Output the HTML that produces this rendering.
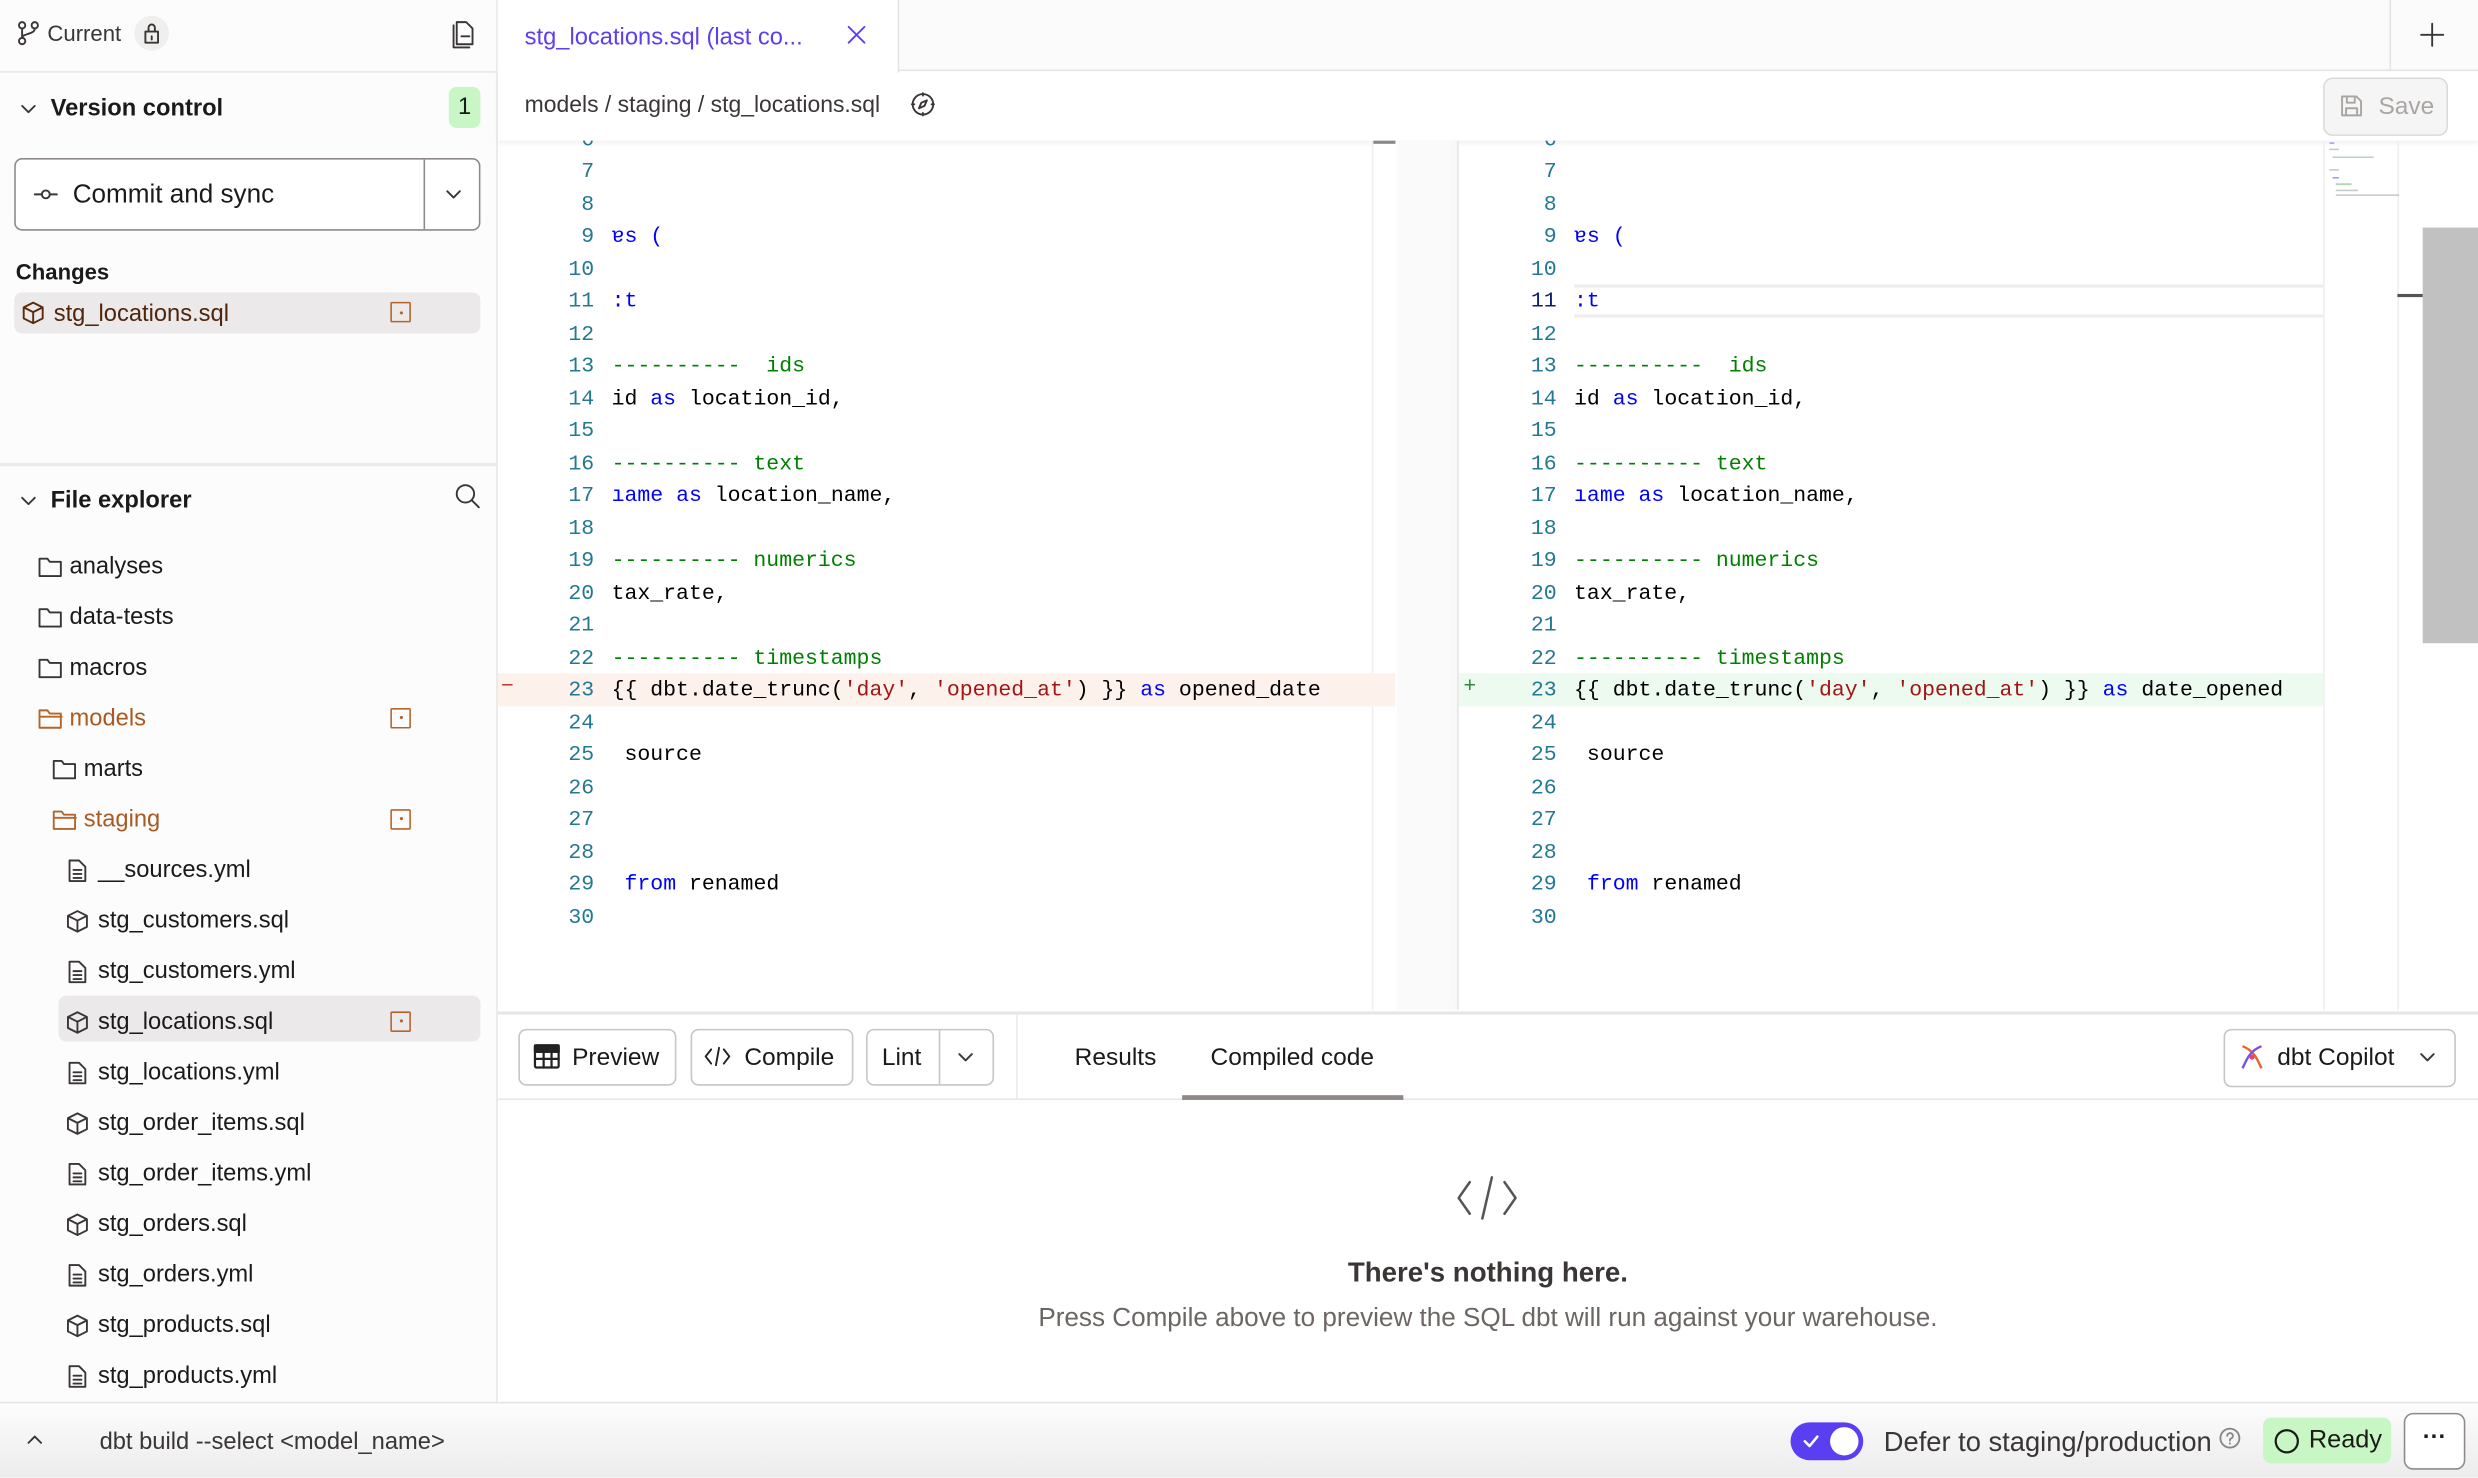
<!DOCTYPE html>
<html><head><meta charset="utf-8"><style>
*{box-sizing:border-box;margin:0;padding:0}
html,body{width:2478px;height:1478px;overflow:hidden;background:#fff}
#w{width:1568px;height:935px;transform:scale(1.58036);transform-origin:0 0;position:relative;font-family:"Liberation Sans",sans-serif;color:#1c1a19;font-size:15px}
.a{position:absolute}
.ic{position:absolute;fill:none;stroke:#3a3635;stroke-width:1.2;stroke-linecap:round;stroke-linejoin:round}
.mono{font-family:"Liberation Mono",monospace;font-size:13.6px}
.ln{position:absolute;width:40px;text-align:right;color:#237893}
.cd{position:absolute;white-space:pre;color:#000}
.k{color:#0000ff}.c{color:#008000}.s{color:#a31515}
.tree{position:absolute;left:0;height:32px;line-height:32px;font-size:15px}
.btn{position:absolute;border:1px solid #c8c4c2;border-radius:5px;background:#fff;height:36px;line-height:34px;font-size:15px}
.dot{position:absolute;width:13px;height:13px;border:1.3px solid #b5652b;border-radius:1px}
.dot:after{content:"";position:absolute;left:4.5px;top:4.5px;width:2px;height:2px;background:#b5652b;border-radius:1px}
</style></head><body><div id="w">
<!-- sidebar -->
<div class="a" style="left:0;top:0;width:315px;height:888px;background:#fcfcfc;border-right:1px solid #e8e6e5"></div>
<div class="a" style="left:0;top:45px;width:315px;height:1px;background:#e8e6e5"></div>
<svg class="ic" style="left:10px;top:13px" width="16" height="16"><circle cx="4" cy="3" r="2"/><circle cx="12" cy="3" r="2"/><circle cx="4" cy="13" r="2"/><path d="M4 5v6M12 5c0 4-8 3-8 6"/></svg>
<div class="a" style="left:30px;top:13px;font-size:14px;color:#3a3635">Current</div>
<div class="a" style="left:85px;top:10px;width:22px;height:22px;border-radius:11px;background:#f0efee"></div>
<svg class="ic" style="left:89px;top:14px" width="14" height="14"><rect x="3" y="6" width="8" height="7"/><path d="M5 6V3.5a2 2 0 0 1 4 0V6M7 9v2"/></svg>
<svg class="ic" style="left:285px;top:12px" width="18" height="20"><path d="M4 2h6l4 4v10H4z M2 4v14h10"/><path d="M7 11h5"/></svg>
<svg class="ic" style="left:11px;top:62px" width="14" height="14"><path d="M3 5l4 4 4-4"/></svg>
<div class="a" style="left:32px;top:60px;font-weight:bold;font-size:15px">Version control</div>
<div class="a" style="left:284px;top:55px;width:20px;height:26px;border-radius:5px;background:#c8f7c5;text-align:center;line-height:26px;font-size:15px">1</div>
<div class="a" style="left:9px;top:100px;width:295px;height:46px;border:1px solid #8f8a88;border-radius:5px;background:#fff"></div>
<div class="a" style="left:268px;top:101px;width:1px;height:44px;background:#8f8a88"></div>
<svg class="ic" style="left:20px;top:116px" width="18" height="14"><circle cx="9" cy="7" r="2.5"/><path d="M2 7h4.5M11.5 7h4.5"/></svg>
<div class="a" style="left:46px;top:114px;font-size:16.5px">Commit and sync</div>
<svg class="ic" style="left:280px;top:116px" width="14" height="14"><path d="M3 5l4 4 4-4"/></svg>
<div class="a" style="left:10px;top:164px;font-weight:bold;font-size:14px">Changes</div>
<div class="a" style="left:9px;top:185px;width:295px;height:26px;border-radius:5px;background:#ebe9e9"></div>
<svg class="ic" style="left:13px;top:190px;stroke:#5a2a0a" width="16" height="16"><path d="M8 1.5l6 3v7l-6 3-6-3v-7zM2 4.5l6 3 6-3M8 7.5v7"/></svg>
<div class="a" style="left:34px;top:190px;color:#4f250c;font-size:15px">stg_locations.sql</div>
<div class="dot" style="left:247px;top:191px"></div>
<div class="a" style="left:0;top:293px;width:315px;height:2px;background:#eceae9"></div>
<svg class="ic" style="left:11px;top:310px" width="14" height="14"><path d="M3 5l4 4 4-4"/></svg>
<div class="a" style="left:32px;top:308px;font-weight:bold;font-size:15px">File explorer</div>
<svg class="ic" style="left:287px;top:305px" width="18" height="18"><circle cx="7.5" cy="7.5" r="5.5"/><path d="M11.5 11.5l4.5 4.5"/></svg>
<div style="position:absolute;left:0;top:342.5px;width:315px">
<svg class="ic" style="left:24px;top:9px" width="16" height="14"><path d="M1 1.5h5l1.5 2h7v9H1z"/></svg><div class="tree" style="left:44px;top:0">analyses</div>
<svg class="ic" style="left:24px;top:41px" width="16" height="14"><path d="M1 1.5h5l1.5 2h7v9H1z"/></svg><div class="tree" style="left:44px;top:32px">data-tests</div>
<svg class="ic" style="left:24px;top:73px" width="16" height="14"><path d="M1 1.5h5l1.5 2h7v9H1z"/></svg><div class="tree" style="left:44px;top:64px">macros</div>
<svg class="ic" style="left:24px;top:105px;stroke:#b5652b" width="16" height="14"><path d="M1 1.5h5l1.5 2h7v9H1zM1 5.5h14"/></svg><div class="tree" style="left:44px;top:96px;color:#a95a22">models</div><div class="dot" style="left:247px;top:105px"></div>
<svg class="ic" style="left:33px;top:137px" width="16" height="14"><path d="M1 1.5h5l1.5 2h7v9H1z"/></svg><div class="tree" style="left:53px;top:128px">marts</div>
<svg class="ic" style="left:33px;top:169px;stroke:#b5652b" width="16" height="14"><path d="M1 1.5h5l1.5 2h7v9H1zM1 5.5h14"/></svg><div class="tree" style="left:53px;top:160px;color:#a95a22">staging</div><div class="dot" style="left:247px;top:169px"></div>
<div class="a" style="left:37px;top:287px;width:267px;height:29px;border-radius:5px;background:#ebe9e9"></div>
</div>
<div style="position:absolute;left:0;top:534.5px;width:315px">
<svg class="ic" style="left:42px;top:8px" width="14" height="16"><path d="M2 1.5h6l4 4v9H2zM4.5 7.5h5M4.5 10h5M4.5 12.5h5"/></svg><div class="tree" style="left:62px;top:0">__sources.yml</div>
<svg class="ic" style="left:41px;top:40px" width="16" height="16"><path d="M8 1.5l6 3v7l-6 3-6-3v-7zM2 4.5l6 3 6-3M8 7.5v7"/></svg><div class="tree" style="left:62px;top:32px">stg_customers.sql</div>
<svg class="ic" style="left:42px;top:72px" width="14" height="16"><path d="M2 1.5h6l4 4v9H2zM4.5 7.5h5M4.5 10h5M4.5 12.5h5"/></svg><div class="tree" style="left:62px;top:64px">stg_customers.yml</div>
<svg class="ic" style="left:41px;top:104px" width="16" height="16"><path d="M8 1.5l6 3v7l-6 3-6-3v-7zM2 4.5l6 3 6-3M8 7.5v7"/></svg><div class="tree" style="left:62px;top:96px">stg_locations.sql</div><div class="dot" style="left:247px;top:105px"></div>
<svg class="ic" style="left:42px;top:136px" width="14" height="16"><path d="M2 1.5h6l4 4v9H2zM4.5 7.5h5M4.5 10h5M4.5 12.5h5"/></svg><div class="tree" style="left:62px;top:128px">stg_locations.yml</div>
<svg class="ic" style="left:41px;top:168px" width="16" height="16"><path d="M8 1.5l6 3v7l-6 3-6-3v-7zM2 4.5l6 3 6-3M8 7.5v7"/></svg><div class="tree" style="left:62px;top:160px">stg_order_items.sql</div>
<svg class="ic" style="left:42px;top:200px" width="14" height="16"><path d="M2 1.5h6l4 4v9H2zM4.5 7.5h5M4.5 10h5M4.5 12.5h5"/></svg><div class="tree" style="left:62px;top:192px">stg_order_items.yml</div>
<svg class="ic" style="left:41px;top:232px" width="16" height="16"><path d="M8 1.5l6 3v7l-6 3-6-3v-7zM2 4.5l6 3 6-3M8 7.5v7"/></svg><div class="tree" style="left:62px;top:224px">stg_orders.sql</div>
<svg class="ic" style="left:42px;top:264px" width="14" height="16"><path d="M2 1.5h6l4 4v9H2zM4.5 7.5h5M4.5 10h5M4.5 12.5h5"/></svg><div class="tree" style="left:62px;top:256px">stg_orders.yml</div>
<svg class="ic" style="left:41px;top:296px" width="16" height="16"><path d="M8 1.5l6 3v7l-6 3-6-3v-7zM2 4.5l6 3 6-3M8 7.5v7"/></svg><div class="tree" style="left:62px;top:288px">stg_products.sql</div>
<svg class="ic" style="left:42px;top:328px" width="14" height="16"><path d="M2 1.5h6l4 4v9H2zM4.5 7.5h5M4.5 10h5M4.5 12.5h5"/></svg><div class="tree" style="left:62px;top:320px">stg_products.yml</div>
</div>
<!-- tab bar -->
<div class="a" style="left:315px;top:0;width:1253px;height:45px;background:#fbfbfb;border-bottom:1px solid #e6e4e3"></div>
<div class="a" style="left:315px;top:0;width:254px;height:46px;background:#fff;border-right:1px solid #e6e4e3"></div>
<div class="a" style="left:332px;top:15px;color:#5b3ff0;font-size:15px">stg_locations.sql (last co...</div>
<svg class="ic" style="left:535px;top:15px;stroke:#5b3ff0" width="14" height="14"><path d="M2 2l10 10M12 2L2 12"/></svg>
<div class="a" style="left:1512px;top:0;width:1px;height:45px;background:#e6e4e3"></div>
<svg class="ic" style="left:1531px;top:14px" width="16" height="16"><path d="M8 1v14M1 8h14"/></svg>
<!-- breadcrumb -->
<div class="a" style="left:315px;top:46px;width:1253px;height:43px;background:#fff;box-shadow:0 2px 3px rgba(0,0,0,.06)"></div>
<div class="a" style="left:332px;top:59px;font-size:14.5px;color:#3a3635">models / staging / stg_locations.sql</div>
<svg class="ic" style="left:576px;top:58px" width="16" height="16"><circle cx="8" cy="8" r="6.5"/><path d="M10.5 5.5L9 9 5.5 10.5 7 7z"/><path d="M8 1v1.5M8 13.5V15M1 8h1.5M13.5 8H15"/></svg>
<div class="a" style="left:1470px;top:49px;width:79px;height:37px;border:1px solid #dcdad9;border-radius:6px;background:#f6f5f5"></div>
<svg class="ic" style="left:1480px;top:59px;stroke:#a9a5a3" width="16" height="16"><path d="M2 2h9l3 3v9H2zM5 2v4h5V2M4.5 14V9.5h7V14"/></svg>
<div class="a" style="left:1505px;top:59px;color:#a9a5a3;font-size:15.5px">Save</div>
<!-- editor -->
<div class="a" style="left:868px;top:89px;width:16px;height:550px;background:#fff;border-left:1px solid #eee"></div>
<div class="a" style="left:869px;top:89px;width:14px;height:2px;background:#888"></div>
<div class="a" style="left:884px;top:89px;width:38px;height:550px;background:#fafafa"></div>
<div class="a" style="left:922px;top:89px;width:1px;height:550px;background:#e4e4e4;box-shadow:-2px 0 4px rgba(0,0,0,.06)"></div>
<div class="a" style="left:1470px;top:89px;width:1px;height:550px;background:#eee"></div>
<div class="a" style="left:1517px;top:89px;width:1px;height:550px;background:#eee"></div>
<div class="a" style="left:1533px;top:144px;width:35px;height:263px;background:#c1c1c1"></div>
<div class="a" style="left:1517px;top:186px;width:16px;height:2px;background:#555"></div>
<div class="a" style="left:996px;top:180px;width:474px;height:21px;border-top:2px solid #eee;border-bottom:2px solid #eee"></div>
<div class="a" style="left:315px;top:426px;width:568px;height:21px;background:#fdf1ec"></div>
<div class="a" style="left:923px;top:426px;width:547px;height:21px;background:#edfaef"></div>
<div class="a mono" style="left:317px;top:428px;color:#c0392b">−</div>
<div class="a mono" style="left:926px;top:428px;color:#2e8b3e">+</div>
<!-- minimap -->
<svg class="a" style="left:1472px;top:90px" width="46" height="40"><g fill="#9aa" opacity=".6"><rect x="2" y="0" width="3" height="1" fill="#55f"/><rect x="2" y="4" width="6" height="1"/><rect x="4" y="9" width="26" height="1"/><rect x="2" y="17" width="6" height="1"/><rect x="4" y="22" width="4" height="1" fill="#55f"/><rect x="6" y="26" width="10" height="1" fill="#6b6"/><rect x="6" y="30" width="14" height="1"/><rect x="6" y="33" width="40" height="1"/></g></svg>
<div id="L"></div><div id="R"></div>
<!-- bottom panel -->
<div class="a" style="left:315px;top:640px;width:1253px;height:2px;background:#e8e6e5"></div>
<div class="a" style="left:315px;top:695px;width:1253px;height:1px;background:#e8e6e5"></div>
<div class="a" style="left:643px;top:642px;width:1px;height:53px;background:#eceae9"></div>
<div class="btn" style="left:328px;top:651px;width:100px"></div>
<svg class="ic" style="left:337px;top:660px;stroke:#222;stroke-width:1.4" width="18" height="17"><rect x="1.5" y="1.5" width="15" height="14" rx="1"/><path d="M1.5 5.5h15M1.5 10h15M7 5.5v10M12 5.5v10"/><rect x="1.5" y="1.5" width="15" height="4" fill="#222"/></svg>
<div class="a" style="left:362px;top:661px;font-size:15.5px">Preview</div>
<div class="btn" style="left:437px;top:651px;width:103px"></div>
<svg class="ic" style="left:445px;top:661px;stroke:#222" width="18" height="15"><path d="M5 3L1.5 7.5 5 12M13 3l3.5 4.5L13 12M10 2L8 13"/></svg>
<div class="a" style="left:471px;top:661px;font-size:15.5px">Compile</div>
<div class="btn" style="left:548px;top:651px;width:81px"></div>
<div class="a" style="left:594px;top:652px;width:1px;height:34px;background:#c8c4c2"></div>
<div class="a" style="left:558px;top:661px;font-size:15.5px">Lint</div>
<svg class="ic" style="left:604px;top:662px" width="14" height="14"><path d="M3 5l4 4 4-4"/></svg>
<div class="a" style="left:680px;top:661px;font-size:15.5px">Results</div>
<div class="a" style="left:766px;top:661px;font-size:15.5px">Compiled code</div>
<div class="a" style="left:748px;top:693px;width:140px;height:3px;background:#8e8886"></div>
<div class="btn" style="left:1407px;top:651px;width:147px;height:37px"></div>
<svg class="a" style="left:1416px;top:660px" width="18" height="18" fill="none" stroke-width="1.5"><path d="M3 2c8 3 10 10 12 14" stroke="#e8642a"/><path d="M15 2C7 5 5 12 3 16" stroke="#7b4dea"/><circle cx="9" cy="9" r="1.6" fill="#e0457b" stroke="none"/></svg>
<div class="a" style="left:1441px;top:661px;font-size:15.5px">dbt Copilot</div>
<svg class="ic" style="left:1529px;top:662px" width="14" height="14"><path d="M3 5l4 4 4-4"/></svg>
<svg class="ic" style="left:920px;top:743px;stroke:#555;stroke-width:1.6" width="42" height="30"><path d="M10 5L3 15l7 10M32 5l7 10-7 10M24 2l-6 26"/></svg>
<div class="a" style="left:0;width:1568px;padding-left:315px;top:795px;text-align:center;font-size:17.5px;font-weight:bold;color:#3a3635">There's nothing here.</div>
<div class="a" style="left:0;width:1568px;padding-left:315px;top:825px;text-align:center;font-size:16.5px;color:#6b6664">Press Compile above to preview the SQL dbt will run against your warehouse.</div>
<!-- status bar -->
<div class="a" style="left:0;top:887px;width:1568px;height:48px;background:linear-gradient(#fcfcfc,#ececec);border-top:1px solid #e6e4e3"></div>
<svg class="ic" style="left:15px;top:904px" width="14" height="14"><path d="M3 9l4-4 4 4"/></svg>
<div class="a" style="left:63px;top:904px;font-size:15px;color:#3a3635">dbt build --select &lt;model_name&gt;</div>
<div class="a" style="left:1133px;top:900px;width:46px;height:24px;border-radius:12px;background:#5a3ff2"></div>
<div class="a" style="left:1158px;top:903px;width:18px;height:18px;border-radius:9px;background:#fff"></div>
<svg class="ic" style="left:1140px;top:906px;stroke:#fff;stroke-width:1.6" width="12" height="12"><path d="M2 6l3 3 5-6"/></svg>
<div class="a" style="left:1192px;top:902px;font-size:17.3px;color:#3a3635">Defer to staging/production</div>
<svg class="ic" style="left:1404px;top:903px;stroke:#888" width="14" height="14"><circle cx="7" cy="7" r="6"/><path d="M5.3 5.5a1.8 1.8 0 1 1 2.3 1.8c-.5.2-.6.5-.6 1.2M7 10.3v.2"/></svg>
<div class="a" style="left:1432px;top:897px;width:81px;height:29px;border-radius:5px;background:#c8f7c5"></div>
<svg class="ic" style="left:1438px;top:903px;stroke:#1c1a19;stroke-width:1.4" width="18" height="18"><circle cx="9" cy="9" r="7"/></svg>
<div class="a" style="left:1461px;top:903px;font-size:16px">Ready</div>
<div class="a" style="left:1521px;top:894px;width:39px;height:36px;border:1px solid #8f8a88;border-radius:6px;background:#fff;text-align:center;line-height:30px;font-weight:bold;font-size:15px">···</div>
</div>
<script>
var rows=[[6,""],[7,""],[8,""],[9,'<span class="k">\u0250s (</span>'],[10,""],[11,'<span class="k">:t</span>'],[12,""],[13,'<span class="c">----------  ids</span>'],[14,'id <span class="k">as</span> location_id,'],[15,""],[16,'<span class="c">---------- text</span>'],[17,'<span class="k">\u0131ame</span> <span class="k">as</span> location_name,'],[18,""],[19,'<span class="c">---------- numerics</span>'],[20,'tax_rate,'],[21,""],[22,'<span class="c">---------- timestamps</span>'],[23,'{{ dbt.date_trunc(<span class="s">\'day\'</span>, <span class="s">\'opened_at\'</span>) }} <span class="k">as</span> X'],[24,""],[25,' source'],[26,""],[27,""],[28,""],[29,' <span class="k">from</span> renamed'],[30,""]];
function build(id,nx,cx,w,last){var h="";rows.forEach(function(r){var y=87+(r[0]-6)*20.52-5.5;var t=r[1].replace("X",last);
h+='<div class="ln mono" style="left:'+nx+'px;top:'+y+'px;'+(id=="R"&&r[0]==11?'color:#0b216f':'')+'">'+r[0]+'</div>';
if(t)h+='<div class="cd mono" style="left:'+cx+'px;top:'+y+'px">'+t+'</div>';});
var d=document.getElementById(id);d.style.cssText="position:absolute;left:0;top:0;width:1568px;height:640px;overflow:hidden;clip-path:inset(89px "+(1568-w)+"px 0 0)";d.innerHTML=h;}
build("L",336,387,868,"opened_date");build("R",945,996,1470,"date_opened");
</script>
</body></html>
